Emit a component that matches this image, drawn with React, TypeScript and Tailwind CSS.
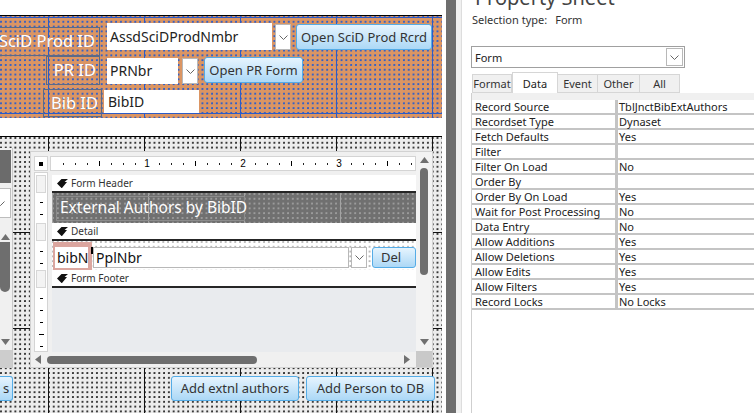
import React from 'react';

const btn =
  "rounded-[3px] border border-[#55ace6] bg-[linear-gradient(#e6f4fe,#acd8f6)] text-[#333] flex items-center justify-center leading-none";

function Chevron() {
  return (
    <svg width="9" height="5" viewBox="0 0 9 5">
      <polyline points="0.5,0.5 4.5,4.5 8.5,0.5" fill="none" stroke="#666" strokeWidth="1" />
    </svg>
  );
}

function Tri({ dir }: { dir: 'up' | 'down' | 'left' | 'right' }) {
  const pts = {
    up: '0,6 4.5,0 9,6',
    down: '0,0 9,0 4.5,6',
    left: '6,0 6,9 0,4.5',
    right: '0,0 0,9 6,4.5',
  }[dir];
  const vertical = dir === 'up' || dir === 'down';
  return (
    <svg width={vertical ? 9 : 6} height={vertical ? 6 : 9} viewBox={vertical ? '0 0 9 6' : '0 0 6 9'}>
      <polygon points={pts} fill="#707070" />
    </svg>
  );
}

function SectionIcon() {
  return (
    <svg width="11" height="9" viewBox="0 0 11 9">
      <path d="M0 4.5 L4.5 0 H11 L7.5 3 H10 L5 9 H4.5 Z" fill="#111" />
    </svg>
  );
}

function DropBtn({ className = '' }: { className?: string }) {
  return (
    <div className={`bg-white border border-[#b8b8b8] flex items-center justify-center ${className}`}>
      <Chevron />
    </div>
  );
}

function HRuler() {
  const cells = Array.from({ length: 32 }, (_, i) => i);
  return (
    <div className="w-[366px] h-[15px] bg-white border border-[#d4d4d4] overflow-hidden">
      <div className="flex h-full items-center -ml-[6px]">
        {cells.map((i) => (
          <div key={i} className="w-[12px] shrink-0 flex justify-center items-center">
            {i === 0 ? null : i % 8 === 0 ? (
              <span className="text-[10px] leading-none text-black font-['Liberation_Sans',sans-serif]">{i / 8}</span>
            ) : i % 4 === 0 ? (
              <span className="w-px h-[5px] bg-black" />
            ) : (
              <span className="w-px h-[2px] bg-[#222]" />
            )}
          </div>
        ))}
      </div>
    </div>
  );
}

function Dashes({ n, pt, longAt = -1 }: { n: number; pt: string; longAt?: number }) {
  return (
    <div className={`flex flex-col items-center gap-[11px] ${pt}`}>
      {Array.from({ length: n }, (_, i) => (
        <span key={i} className={`${i === longAt ? 'w-[5px]' : 'w-[3px]'} h-px bg-black`} />
      ))}
    </div>
  );
}

function VRuler() {
  const box = 'h-[18px] mx-[1px] bg-[#f3f3f3] border border-[#d6d6d6]';
  return (
    <div className="w-[14px] bg-white border border-[#d4d4d4] flex flex-col">
      <div className="h-[2px]" />
      <div className={box} />
      <div className="h-[30px]">
        <Dashes n={2} pt="pt-[9px]" />
      </div>
      <div className={box} />
      <div className="h-[29px]">
        <Dashes n={2} pt="pt-[10px]" />
      </div>
      <div className={box} />
      <div className="flex-1">
        <Dashes n={5} pt="pt-[10px]" longAt={3} />
      </div>
    </div>
  );
}

function Bar({ label }: { label: string }) {
  return (
    <div className="h-[18px] bg-white border-b-2 border-[#262626] flex items-center pl-[5px] gap-[3px]">
      <SectionIcon />
      <span className="text-[10px] text-[#333] leading-none">{label}</span>
    </div>
  );
}

function Design() {
  return (
    <div className="w-[364px] flex flex-col overflow-hidden">
      <div className="h-[3px]" />
      <Bar label="Form Header" />
      <div className="h-[30px] bg-[#707070] bg-[linear-gradient(90deg,#a4a4a4_1px,transparent_1px),radial-gradient(circle_at_1px_1px,#9c9c9c_0.7px,transparent_1px)] bg-[length:96px_100%,4.8px_4.8px] bg-[position:96px_0,0_0] flex items-center pl-[4px]">
        <div className="w-[189px] h-[25px] border border-[#8c8c8c] flex items-center pl-[3px] text-white text-[15.5px] leading-none whitespace-nowrap">
          External Authors by BibID
        </div>
      </div>
      <Bar label="Detail" />
      <div className="h-[29px] bg-white bg-[radial-gradient(circle_at_1px_1px,#b8b8b8_0.7px,transparent_1px)] bg-[length:4.8px_4.8px] flex items-start">
        <div className="ml-[1px] mt-[1px] w-[40px] h-[28px] bg-[#dba69f] pl-[2px] pt-[5px]">
          <div className="w-[33px] h-[21px] bg-white flex items-center pl-[2px] text-[14px] text-[#111] leading-none overflow-hidden">
            bibN
          </div>
        </div>
        <div className="-ml-[1px] mt-[6px] w-[2px] h-[7px] bg-black" />
        <div className="mt-[6px] w-[262px] h-[21px] bg-white border border-[#b8b8b8] flex items-center pl-[2px] text-[14px] text-[#111] leading-none">
          PplNbr
        </div>
        <DropBtn className="ml-[2px] mt-[6px] w-[16px] h-[21px] shrink-0" />
        <div className={`${btn} ml-[5px] mt-[6px] w-[44px] h-[21px] shrink-0 text-[13px] justify-start pl-[8px]`}>Del</div>
      </div>
      <Bar label="Form Footer" />
      <div className="flex-1 bg-[#e9ebee]" />
    </div>
  );
}

function Subform() {
  return (
    <div className="ml-[17px] mt-[14px] w-[403px] h-[217px] bg-[#f0f0f0] border border-[#d2d2d2] flex">
      <div className="w-[385px] flex flex-col">
        <div className="h-[19px] flex items-end gap-[2px] pl-[3px]">
          <div className="w-[14px] h-[15px] bg-white border border-[#d4d4d4] flex items-center justify-center">
            <div className="w-[4px] h-[4px] bg-black" />
          </div>
          <HRuler />
        </div>
        <div className="flex-1 flex gap-[4px] pl-[3px] pt-[1px]">
          <VRuler />
          <Design />
        </div>
        <div className="h-[15px] flex items-center pl-[4px]">
          <Tri dir="left" />
          <div className="ml-[6px] w-[210px] h-[8px] rounded-full bg-[#6e6e6e]" />
          <div className="flex-1" />
          <div className="mr-[6px]">
            <Tri dir="right" />
          </div>
        </div>
      </div>
      <div className="w-[17px] flex flex-col">
        <div className="flex-1 bg-[#f3f3f3] flex flex-col items-center pt-[5px] pb-[6px]">
          <Tri dir="up" />
          <div className="mt-[5px] w-[8px] h-[107px] rounded-full bg-[#6e6e6e]" />
          <div className="flex-1" />
          <Tri dir="down" />
        </div>
        <div className="h-[16px] bg-[#c9c9c9]" />
      </div>
    </div>
  );
}

function LeftPartial() {
  return (
    <div className="mt-[11px] w-[13px] h-[220px] bg-[#f0f0f0] border-r border-[#c8c8c8] flex flex-col shrink-0">
      <div className="h-[2px]" />
      <div className="h-[33px] w-[11px] bg-[#6b6b6b]" />
      <div className="h-[5px]" />
      <div className="h-[30px] w-[11px] bg-white border border-l-0 border-[#bdbdbd] flex items-center overflow-hidden">
        <div className="-ml-[4px]">
          <Chevron />
        </div>
      </div>
      <div className="h-[10px]" />
      <div className="flex-1 flex flex-col items-start pl-[1px] pt-[6px] pb-[5px]">
        <Tri dir="up" />
        <div className="mt-[2px] -ml-[1px] w-[10px] h-[50px] rounded-b-full bg-[#6e6e6e]" />
        <div className="flex-1" />
        <Tri dir="down" />
      </div>
      <div className="h-[18px] bg-[#cdcdcd]" />
    </div>
  );
}

function Canvas() {
  return (
    <div className="w-[442px] flex flex-col shrink-0">
      <div className="h-[16px] bg-white border-b border-black" />
      <div className="h-[102px] bg-[#db9563] bg-[linear-gradient(90deg,#2b5bc8_1px,transparent_1px),linear-gradient(#2b5bc8_1px,transparent_1px),radial-gradient(circle_at_1px_1px,#3160c8_0.7px,transparent_1px)] bg-[length:96px_100%,100%_96px,4.8px_4.8px] bg-[position:48px_0,0_97px,0_0] flex flex-col">
        <div className="mt-[7px] h-[33px] flex items-start">
          <div className="mt-[4px] w-[100px] h-[29px] border border-l-0 border-[#5a6a88] flex items-center justify-end pr-[4px] text-white text-[16.5px] leading-none whitespace-nowrap overflow-hidden">
            SciD Prod ID
          </div>
          <div className="ml-[7px] w-[165px] h-[27px] bg-white flex items-center pl-[3px] text-[14px] text-[#222] leading-none">
            AssdSciDProdNmbr
          </div>
          <DropBtn className="ml-[3px] mt-[1px] w-[16px] h-[26px]" />
          <div className={`${btn} ml-[5px] mt-[1px] w-[136px] h-[26px] text-[13px]`}>Open SciD Prod Rcrd</div>
        </div>
        <div className="h-[29px] flex items-start">
          <div className="ml-[46px] w-[54px] h-[29px] border border-[#5a6a88] flex items-center justify-end pr-[3px] text-white text-[16.5px] leading-none">
            PR ID
          </div>
          <div className="ml-[7px] mt-[2px] w-[71px] h-[26px] bg-white flex items-center pl-[3px] text-[14px] text-[#222] leading-none">
            PRNbr
          </div>
          <DropBtn className="ml-[4px] mt-[2px] w-[16px] h-[26px]" />
          <div className={`${btn} ml-[6px] mt-[1px] w-[99px] h-[26px] text-[13px]`}>Open PR Form</div>
        </div>
        <div className="flex items-start">
          <div className="ml-[43px] mt-[4px] w-[59px] h-[28px] border border-[#5a6a88] flex items-center justify-end pr-[3px] text-white text-[16.5px] leading-none">
            Bib ID
          </div>
          <div className="ml-[2px] mt-[5px] w-[95px] h-[23px] bg-white flex items-center pl-[4px] text-[14px] text-[#222] leading-none">
            BibID
          </div>
        </div>
      </div>
      <div className="h-[19px] bg-white border-b border-black" />
      <div className="flex-1 bg-[#ececec] bg-[linear-gradient(90deg,#111_1px,transparent_1px),linear-gradient(#111_1px,transparent_1px),radial-gradient(circle_at_1px_1px,#333_0.7px,transparent_1px)] bg-[length:96px_100%,100%_96px,4.8px_4.8px] bg-[position:48px_0,0_95px,0_0] flex flex-col">
        <div className="flex items-start">
          <LeftPartial />
          <Subform />
        </div>
        <div className="mt-[8px] flex items-start">
          <div className={`${btn} w-[13px] h-[25px] rounded-l-none border-l-0 text-[13px]`}>s</div>
          <div className={`${btn} ml-[158px] w-[128px] h-[25px] text-[13px]`}>Add extnl authors</div>
          <div className={`${btn} ml-[7px] w-[129px] h-[25px] text-[13px]`}>Add Person to DB</div>
        </div>
      </div>
    </div>
  );
}

const rows: [string, string][] = [
  ['Record Source', 'TblJnctBibExtAuthors'],
  ['Recordset Type', 'Dynaset'],
  ['Fetch Defaults', 'Yes'],
  ['Filter', ''],
  ['Filter On Load', 'No'],
  ['Order By', ''],
  ['Order By On Load', 'Yes'],
  ['Wait for Post Processing', 'No'],
  ['Data Entry', 'No'],
  ['Allow Additions', 'Yes'],
  ['Allow Deletions', 'Yes'],
  ['Allow Edits', 'Yes'],
  ['Allow Filters', 'Yes'],
  ['Record Locks', 'No Locks'],
];

const tabs = [
  { label: 'Format', w: 'w-[40px]' },
  { label: 'Data', w: 'w-[46px]', active: true },
  { label: 'Event', w: 'w-[41px]' },
  { label: 'Other', w: 'w-[43px]' },
  { label: 'All', w: 'w-[41px]' },
];

function PropertySheet() {
  return (
    <div className="flex-1 flex text-[11px] text-[#333]">
      <div className="w-[6px] bg-[#f0f0f0] border-r border-[#dddddd]" />
      <div className="flex-1 bg-white pl-[9px] flex flex-col">
        <div className="-mt-[12px] pl-[4px] text-[20px] leading-[20px] text-[#444] whitespace-nowrap">Property Sheet</div>
        <div className="mt-[4px] h-[14px] flex items-center pl-[1px] leading-none whitespace-nowrap">
          <span>Selection type:</span>
          <span className="ml-[8px]">Form</span>
        </div>
        <div className="mt-[20px] w-[214px] h-[22px] border border-[#a0a0a0] flex items-center pl-[3px] pr-[1px]">
          <span className="flex-1 leading-none text-[#222]">Form</span>
          <DropBtn className="w-[17px] h-[18px] border-[#a8a8a8]" />
        </div>
        <div className="mt-[4px] h-[21px] flex items-end pl-[1px]">
          {tabs.map((t) => (
            <div
              key={t.label}
              className={`${t.w} flex items-center justify-center leading-none border border-[#d6d6d6] ${
                t.active ? 'h-[21px] bg-white border-b-0 text-[#222]' : 'h-[19px] bg-[#f0f0f0] -ml-px first:ml-0'
              }`}
            >
              {t.label}
            </div>
          ))}
        </div>
        <div className="flex-1 border-l border-[#cfcfcf] flex flex-col">
          <div className="h-[7px] bg-[#f0f0f0]" />
          {rows.map(([k, v]) => (
            <div key={k} className="h-[15px] border-b-2 border-[#c4c4c4] flex items-center text-[#222]">
              <div className="w-[143px] pl-[3px] leading-none whitespace-nowrap">{k}</div>
              <div className="w-[3px] h-full bg-[#c4c4c4]" />
              <div className="pl-[1px] leading-none whitespace-nowrap">{v}</div>
            </div>
          ))}
        </div>
      </div>
    </div>
  );
}

export default function App() {
  return (
    <div className="w-[754px] h-[413px] flex overflow-hidden bg-white font-['Noto_Sans','Open_Sans',sans-serif]">
      <Canvas />
      <div className="w-[4px] bg-white shrink-0" />
      <div className="w-[10px] bg-[#6e6e6e] shrink-0" />
      <PropertySheet />
    </div>
  );
}
